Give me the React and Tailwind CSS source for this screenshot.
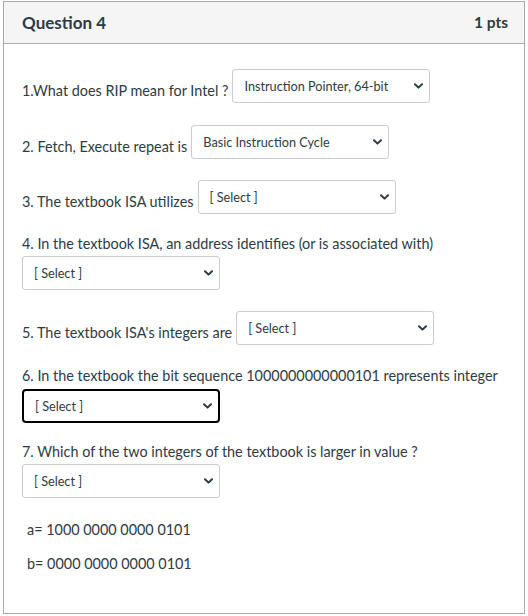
import React from "react";

function Chevron() {
  return (
    <svg width="9" height="6" viewBox="0 0 9 6" className="shrink-0">
      <path d="M1 1.2 L4.5 4.6 L8 1.2" fill="none" stroke="#2d3b45" strokeWidth="2" strokeLinecap="round" strokeLinejoin="round" />
    </svg>
  );
}

function Sel({ text, focused }) {
  return (
    <div
      className={
        "w-[198px] h-[34px] flex items-center justify-between pl-[11px] pr-[6px] bg-white text-[12.7px] text-[#2d3b45] shrink-0 " +
        (focused ? "border-2 border-black rounded-[4px] pl-[10px] pr-[5px]" : "border border-[#c7cdd1] rounded-[3px]")
      }
    >
      <span className="leading-none">{text}</span>
      <Chevron />
    </div>
  );
}

function Row({ label, sel, mt }) {
  return (
    <div className={"flex items-end gap-[4px] " + mt}>
      <span className="mb-[2px] leading-[20px]">{label}</span>
      <Sel text={sel} />
    </div>
  );
}

export default function App() {
  return (
    <div
      className="w-[528px] h-[616px] bg-white pt-[1px] pl-[3px]"
      style={{ fontFamily: "Lato, 'Noto Sans', sans-serif" }}
    >
      <div className="w-[522px] h-[613px] border border-[#a9a9a9] text-[#2d3b45] text-[14.4px]">
        <div className="h-[42px] bg-[#f5f5f5] border-b border-[#a9a9a9] flex items-center justify-between pl-[18px] pr-[16px]">
          <span className="font-bold text-[17px]">Question 4</span>
          <span className="font-bold text-[15.5px]">1 pts</span>
        </div>
        <div className="pl-[18px]">
          <Row mt="mt-[25px]" label="1.What does RIP mean for Intel ?" sel="Instruction Pointer, 64-bit" />
          <Row mt="mt-[22px]" label="2. Fetch, Execute repeat is" sel="Basic Instruction Cycle" />
          <Row mt="mt-[21px]" label="3. The textbook ISA utilizes" sel="[ Select ]" />
          <div className="mt-[20px] leading-[20px]">4. In the textbook ISA, an address identifies (or is associated with)</div>
          <div className="mt-[2px]"><Sel text="[ Select ]" /></div>
          <Row mt="mt-[21px]" label="5. The textbook ISA's integers are" sel="[ Select ]" />
          <div className="mt-[21px] leading-[20px]">6. In the textbook the bit sequence 1000000000000101 represents integer</div>
          <div className="mt-[3px]"><Sel text="[ Select ]" focused /></div>
          <div className="mt-[19px] leading-[20px]">7. Which of the two integers of the textbook is larger in value ?</div>
          <div className="mt-[2px]"><Sel text="[ Select ]" /></div>
          <div className="mt-[22px] leading-[20px] pl-[5px]">a= 1000 0000 0000 0101</div>
          <div className="mt-[14px] leading-[20px] pl-[5px]">b= 0000 0000 0000 0101</div>
        </div>
      </div>
    </div>
  );
}
